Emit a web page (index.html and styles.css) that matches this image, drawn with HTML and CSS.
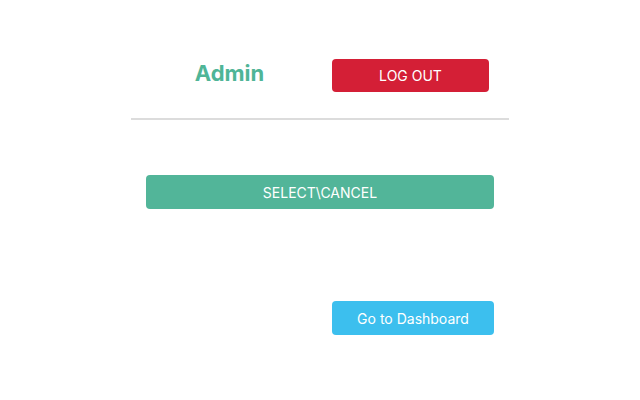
FILE: index.html
```html
<!DOCTYPE html>
<html>
<head>
    <title>Admin</title>
    <link rel="stylesheet" href="styles.css">
</head>
<body>
    <div class="container">
        <div class="header">
            <div class="header__title">Admin</div>
            <div class="header__actions">
                <button class="btn btn--red btn--logout">LOG OUT</button>
            </div>
        </div>
        <hr class="divider">
        <div class="panel">
            <button class="btn btn--green btn--block">SELECT\CANCEL</button>
            <div class="panel__footer">
                <button class="btn btn--blue btn--dash">Go to Dashboard</button>
            </div>
        </div>
    </div>
</body>
</html>
```

FILE: styles.css
```css
* {
    margin: 0;
    padding: 0;
    box-sizing: border-box;
}
body {
    font-family: Inter, "Noto Sans", sans-serif;
    background: #fff;
}
.container {
    width: 378px;
    margin: 0 auto;
    padding-top: 59px;
}
.header {
    display: grid;
    grid-template-columns: 1fr 1fr;
    align-items: center;
    padding: 0 15px;
}
.header__title {
    text-align: center;
    font-size: 22px;
    font-weight: 700;
    color: #4fb597;
    padding-right: 7px;
    padding-bottom: 6px;
}
.header__actions {
    padding-left: 12px;
}
.divider {
    border: none;
    border-top: 2px solid #dcdcdc;
    margin-top: 26px;
}
.panel {
    padding: 55px 15px 0;
}
.btn {
    display: block;
    border: none;
    border-radius: 4px;
    color: #fff;
    font-family: Inter, "Noto Sans", sans-serif;
    font-size: 14px;
    cursor: pointer;
}
.btn--red {
    background: #d41f36;
}
.btn--green {
    background: #52b599;
}
.btn--blue {
    background: #3cbfee;
}
.btn--logout {
    width: 157px;
    height: 33px;
}
.btn--block {
    width: 100%;
    height: 34px;
}
.panel__footer {
    display: flex;
    justify-content: flex-end;
    margin-top: 92px;
}
.btn--dash {
    width: 162px;
    height: 34px;
}
```
